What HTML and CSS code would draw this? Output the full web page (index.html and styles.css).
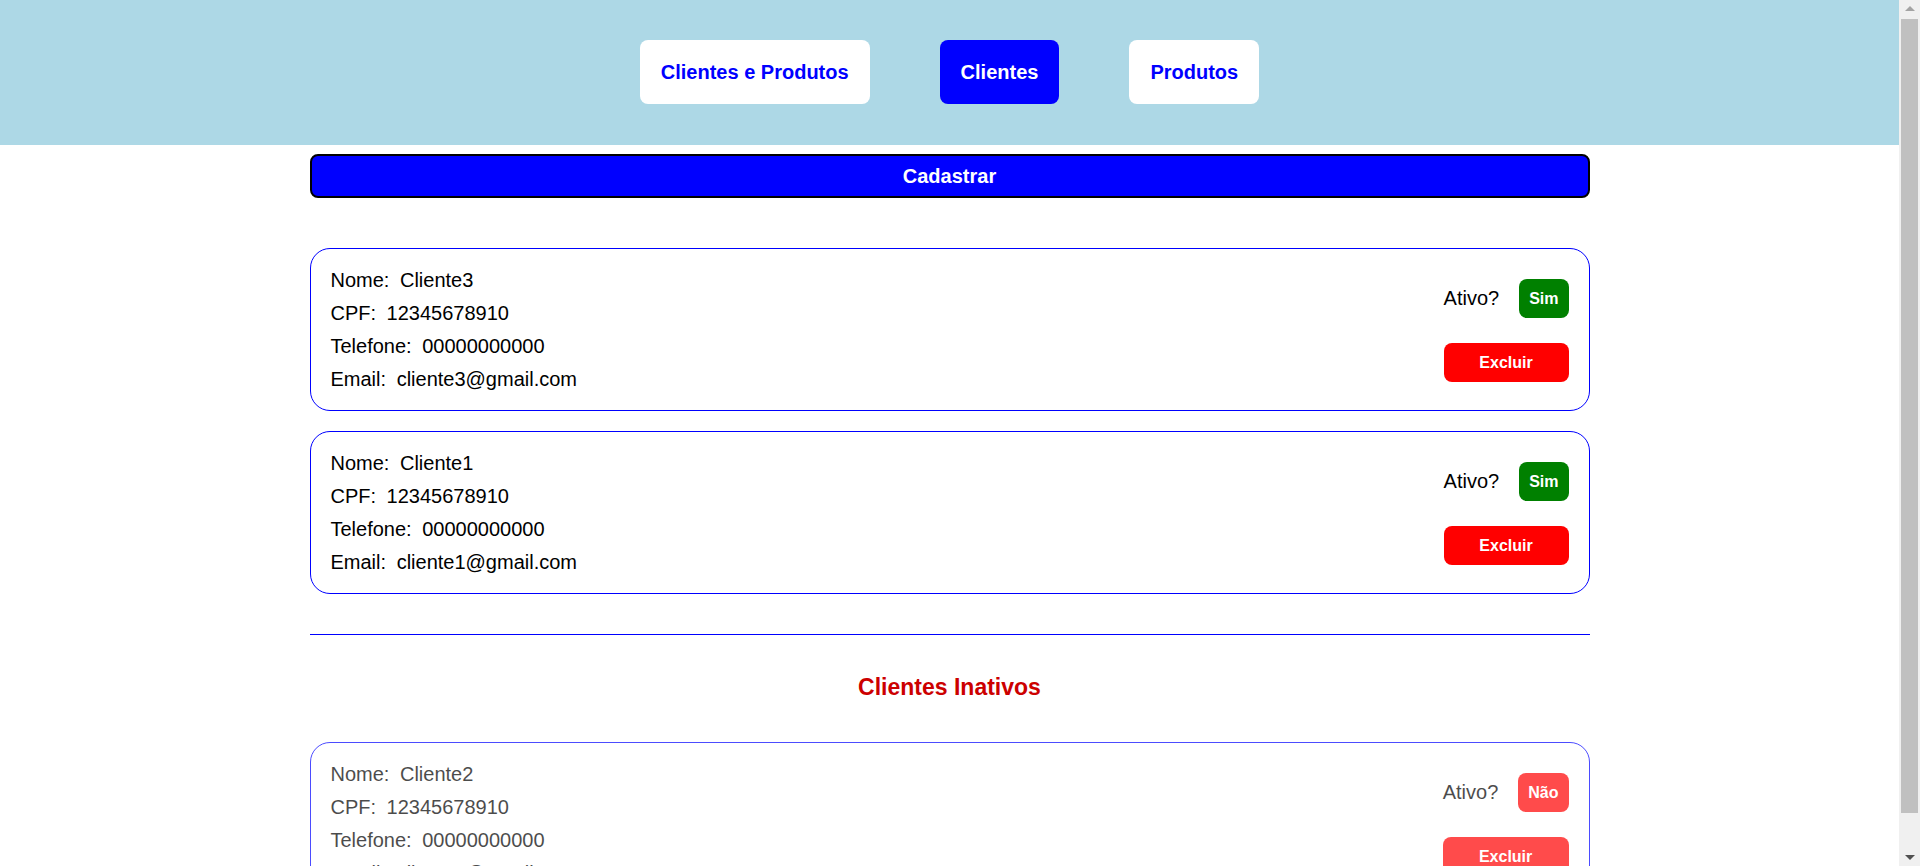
FILE: index.html
```html
<!DOCTYPE html>
<html lang="pt-BR">
<head>
<meta charset="utf-8">
<title>Clientes</title>
<link rel="stylesheet" href="styles.css">
</head>
<body>
<header class="topbar">
  <nav class="nav">
    <button class="nav-btn">Clientes e Produtos</button>
    <button class="nav-btn active">Clientes</button>
    <button class="nav-btn">Produtos</button>
  </nav>
</header>
<main class="main">
  <button class="cadastrar">Cadastrar</button>

  <section class="list">
    <div class="card">
      <div class="info">
        <p><span class="label">Nome:</span> Cliente3</p>
        <p><span class="label">CPF:</span> 12345678910</p>
        <p><span class="label">Telefone:</span> 00000000000</p>
        <p><span class="label">Email:</span> cliente3@gmail.com</p>
      </div>
      <div class="actions">
        <div class="status"><span>Ativo?</span><button class="tag sim">Sim</button></div>
        <button class="excluir">Excluir</button>
      </div>
    </div>
    <div class="card">
      <div class="info">
        <p><span class="label">Nome:</span> Cliente1</p>
        <p><span class="label">CPF:</span> 12345678910</p>
        <p><span class="label">Telefone:</span> 00000000000</p>
        <p><span class="label">Email:</span> cliente1@gmail.com</p>
      </div>
      <div class="actions">
        <div class="status"><span>Ativo?</span><button class="tag sim">Sim</button></div>
        <button class="excluir">Excluir</button>
      </div>
    </div>
  </section>

  <hr class="divider">
  <h2 class="section-title">Clientes Inativos</h2>

  <section class="list">
    <div class="card inactive">
      <div class="info">
        <p><span class="label">Nome:</span> Cliente2</p>
        <p><span class="label">CPF:</span> 12345678910</p>
        <p><span class="label">Telefone:</span> 00000000000</p>
        <p><span class="label">Email:</span> cliente2@gmail.com</p>
      </div>
      <div class="actions">
        <div class="status"><span>Ativo?</span><button class="tag nao">Não</button></div>
        <button class="excluir">Excluir</button>
      </div>
    </div>
  </section>
</main>

<div class="scrollbar" aria-hidden="true">
  <div class="sb-btn"><span class="arrow-up"></span></div>
  <div class="sb-track"><div class="sb-thumb"></div></div>
  <div class="sb-btn"><span class="arrow-down"></span></div>
</div>
</body>
</html>
```
FILE: styles.css
```css
html, body {
  margin: 0;
  padding: 0;
}
body {
  font-family: "Liberation Sans", Arial, sans-serif;
  color: #000;
  background: #fff;
  padding-right: 21px;
}

/* simulated classic scrollbar */
.scrollbar {
  position: fixed;
  top: 0;
  right: 0;
  bottom: 0;
  width: 21px;
  background: #f0f0f0;
  display: flex;
  flex-direction: column;
}
.sb-btn {
  height: 17px;
  display: flex;
  align-items: center;
  justify-content: center;
}
.arrow-up {
  width: 0;
  height: 0;
  border-left: 5px solid transparent;
  border-right: 5px solid transparent;
  border-bottom: 5px solid #a3a3a3;
}
.arrow-down {
  width: 0;
  height: 0;
  border-left: 5px solid transparent;
  border-right: 5px solid transparent;
  border-top: 5px solid #505050;
}
.sb-track {
  flex: 1;
  padding: 2px 2px 0;
}
.sb-thumb {
  height: 794px;
  background: #c0c0c0;
}

.topbar {
  background: lightblue;
  padding: 40px 0 41px;
}
.nav {
  display: flex;
  justify-content: center;
  gap: 70px;
}
.nav-btn {
  font-family: inherit;
  font-size: 20px;
  font-weight: bold;
  line-height: 24px;
  padding: 20px 21px;
  border: none;
  border-radius: 8px;
  background: #fff;
  color: #0000ff;
  cursor: pointer;
}
.nav-btn.active {
  background: #0000ff;
  color: #fff;
}

.main {
  width: 1280px;
  margin: 0 auto;
  padding: 9px 0 4px;
}
.cadastrar {
  display: block;
  width: 100%;
  font-family: inherit;
  font-size: 20px;
  font-weight: bold;
  line-height: 22px;
  padding: 9px 0;
  border: 2px solid #000;
  border-radius: 8px;
  background: #0000ff;
  color: #fff;
  cursor: pointer;
}
.list {
  display: flex;
  flex-direction: column;
  gap: 20px;
  margin-top: 50px;
}
.main .section-title + .list {
  margin-top: 0;
}
.card {
  display: flex;
  justify-content: space-between;
  align-items: center;
  border: 1px solid #0000ff;
  border-radius: 20px;
  padding: 10px 20px 9px;
}
.card.inactive {
  opacity: 0.7;
}
.info p {
  margin: 10px 0;
  font-size: 20px;
  line-height: 23px;
}
.label {
  margin-right: 5px;
}
.actions {
  display: flex;
  flex-direction: column;
  gap: 25px;
}
.status {
  display: flex;
  align-items: center;
  gap: 20px;
  font-size: 20px;
}
.tag, .excluir {
  font-family: inherit;
  font-size: 16px;
  font-weight: bold;
  line-height: 19px;
  padding: 10px 10px;
  border: none;
  border-radius: 8px;
  color: #fff;
  cursor: pointer;
}
.tag.sim {
  background: #008000;
}
.tag.nao {
  background: #ff0000;
}
.excluir {
  background: #ff0000;
  width: 100%;
}
.divider {
  border: none;
  border-top: 1px solid #0000ff;
  margin: 40px 0 0;
}
.section-title {
  text-align: center;
  color: #cc0000;
  font-size: 23px;
  line-height: 26px;
  margin: 39px 0 42px;
}
```
